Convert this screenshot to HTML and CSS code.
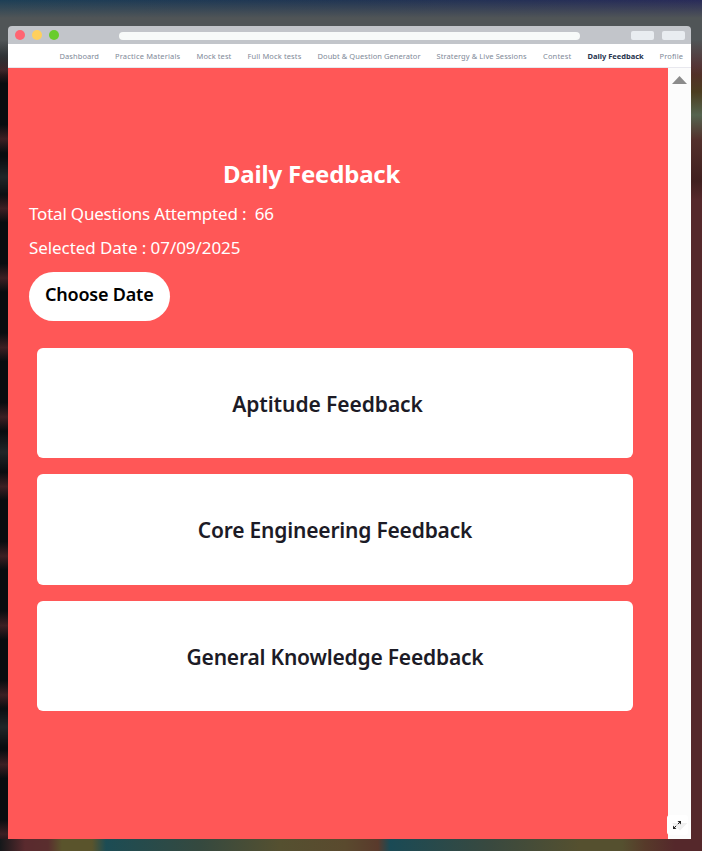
FILE: index.html
```html
<!DOCTYPE html>
<html lang="en">
<head>
<meta charset="utf-8">
<title>Daily Feedback</title>
<link rel="stylesheet" href="styles.css">
</head>
<body>
<div class="window">
  <div class="chrome">
    <i class="dot red"></i><i class="dot yellow"></i><i class="dot green"></i>
    <div class="address"></div>
    <i class="tab"></i><i class="tab last"></i>
  </div>
  <nav class="nav">
    <a class="n1">Dashboard</a>
    <a class="n2">Practice Materials</a>
    <a class="n3">Mock test</a>
    <a class="n4">Full Mock tests</a>
    <a class="n5">Doubt &amp; Question Generator</a>
    <a class="n6">Stratergy &amp; Live Sessions</a>
    <a class="n7">Contest</a>
    <a class="n8 active">Daily Feedback</a>
    <a class="n9">Profile</a>
  </nav>
  <div class="body">
    <main class="page">
      <h1><span>Daily Feedback</span></h1>
      <p class="total">Total Questions Attempted :&nbsp; 66</p>
      <p class="selected">Selected Date : 07/09/2025</p>
      <button class="choose"><span>Choose Date</span></button>
      <section class="cards">
        <div class="card aptitude"><span>Aptitude Feedback</span></div>
        <div class="card core"><span>Core Engineering Feedback</span></div>
        <div class="card general"><span>General Knowledge Feedback</span></div>
      </section>
    </main>
    <aside class="scrollbar">
      <svg class="up" width="15" height="8" viewBox="0 0 15 8"><path d="M7.5 0 15 8H0z" fill="#8b8b8b"/></svg>
      <div class="expand">
        <svg width="21" height="20" viewBox="0 0 21 20"><path d="M5 8H20.500l-7.500 7.500z" fill="#f0f0f0"/><path d="M10.500 6H14v3.500zM6 10.500V14h3.500z" fill="#222"/><path d="M13.500 6.500 10.800 9.200M6.500 13.500 9.200 10.800" fill="none" stroke="#222"/></svg>
      </div>
    </aside>
  </div>
</div>
</body>
</html>
```
FILE: styles.css
```css
* { box-sizing: border-box; }
body {
  margin: 0;
  width: 702px;
  height: 851px;
  padding: 26px 11px 12px 8px;
  overflow: hidden;
  font-family: "Noto Sans", "Open Sans", sans-serif;
  background:
    linear-gradient(180deg, rgba(80,85,87,0) 0, #505557 18px, #505557 40px, rgba(80,85,87,0) 75px) 0 0 / 702px 75px no-repeat,
    linear-gradient(90deg, #1d3f56, #213553 50%, #292b59) 0 0 / 702px 26px no-repeat,
    linear-gradient(90deg, #15181a 0, #5a2a2e 25px, #5a2e2e 48px, #5a542c 62px, #5a542c 92px, #1c4c54 106px, #35493f 200px, #555030 280px, #5a4a2e 345px, #5a3a2c 378px, #1a4a55 390px, #39493f 490px, #55502f 580px, #55502f 622px, #573a2a 645px, #55282b 675px) 0 839px / 702px 12px no-repeat,
    linear-gradient(180deg, #55292b 65px, #4c3d20 92px, #55644f 115px, #53302c 140px, #40201f 181px, #55282b 200px) 100% 0 / 11px 851px no-repeat,
    linear-gradient(180deg, transparent 0 102px, #202628 122px, transparent 142px 192px) 0 55px / 8px 275px repeat-y,
    repeating-linear-gradient(180deg, #3c1f23 0, #080c0f 14px, #080c0f 55px, #3c1f23 69.500px) 0 0 / 8px 851px no-repeat #080c0f;
}
.window { display: flex; flex-direction: column; height: 813px; }
.chrome {
  display: flex;
  align-items: center;
  height: 18px;
  padding: 0 5px 0 7px;
  border-radius: 4px 4px 0 0;
  background: #c2c5ca;
}
.dot { width: 10px; height: 10px; margin-right: 7px; border-radius: 50%; }
.red { background: #ff6572; }
.yellow { background: #ffd05d; }
.green { background: #68cc2d; }
.address { width: 461px; height: 8px; margin: 1px 51px 0 53px; border-radius: 4px; background: #f7faf9; }
.tab { width: 23px; height: 9px; margin-right: 8px; border-radius: 2px; background: #e9edf1; }
.tab.last { margin-right: 0; }
.nav {
  display: flex;
  justify-content: flex-end;
  gap: 16px;
  height: 24px;
  padding-right: 7.500px;
  border-bottom: 1px solid #e8e8ee;
  background: #fff;
  color: #808998;
  font-size: 7.500px;
  line-height: 25px;
  white-space: nowrap;
}
.nav .active { color: #26334d; font-weight: 700; }
.n1 { width: 39.500px; letter-spacing: .08px; }
.n2 { width: 65.500px; letter-spacing: .16px; }
.n3 { width: 35px; letter-spacing: .08px; }
.n4 { width: 54px; letter-spacing: .12px; }
.n5 { width: 103px; letter-spacing: .06px; }
.n6 { width: 90.500px; letter-spacing: .09px; }
.n7 { width: 28.500px; letter-spacing: .16px; }
.n8 { width: 56px; }
.n9 { width: 24px; letter-spacing: .12px; }
.body { display: flex; flex: 1; }
.page { width: 660px; padding: 89px 35px 0 21px; background: #ff5757; color: #fff; }
h1 { margin: 0 0 0 194px; height: 34px; font-size: 24px; line-height: 34px; font-weight: 700; letter-spacing: -.2px; white-space: nowrap; }
p { margin: 0; height: 34px; font-size: 17px; line-height: 34px; white-space: nowrap; }
.total { margin-top: 6px; letter-spacing: -.2px; }
.selected { letter-spacing: -.07px; }
.choose {
  display: block;
  width: 140.500px;
  height: 49px;
  margin: 7px 0 0;
  padding: 0 0 5px;
  border: 0;
  border-radius: 24.500px;
  background: #fff;
  color: #000;
  font: 600 18px/1 "Noto Sans", sans-serif;
  letter-spacing: -.2px;
  white-space: nowrap;
}
.cards { display: grid; gap: 16px; margin: 26.500px 0 0 8px; }
.card {
  display: flex;
  align-items: center;
  justify-content: center;
  height: 110.500px;
  padding-top: 2px;
  border-radius: 6px;
  background: #fff;
  color: #1c1b26;
  font-size: 21px;
  font-weight: 600;
  letter-spacing: -.2px;
  white-space: nowrap;
}
.aptitude { padding-right: 15px; letter-spacing: -.07px; }
.scrollbar {
  display: flex;
  flex-direction: column;
  justify-content: space-between;
  width: 23px;
  padding: 8px 0 4px;
  background: #fcfcfc;
}
.up { margin-left: 4px; }
.expand { width: 21px; height: 20px; margin-left: -1px; border-radius: 3px; background: #fff; }
.expand svg { display: block; }
```
